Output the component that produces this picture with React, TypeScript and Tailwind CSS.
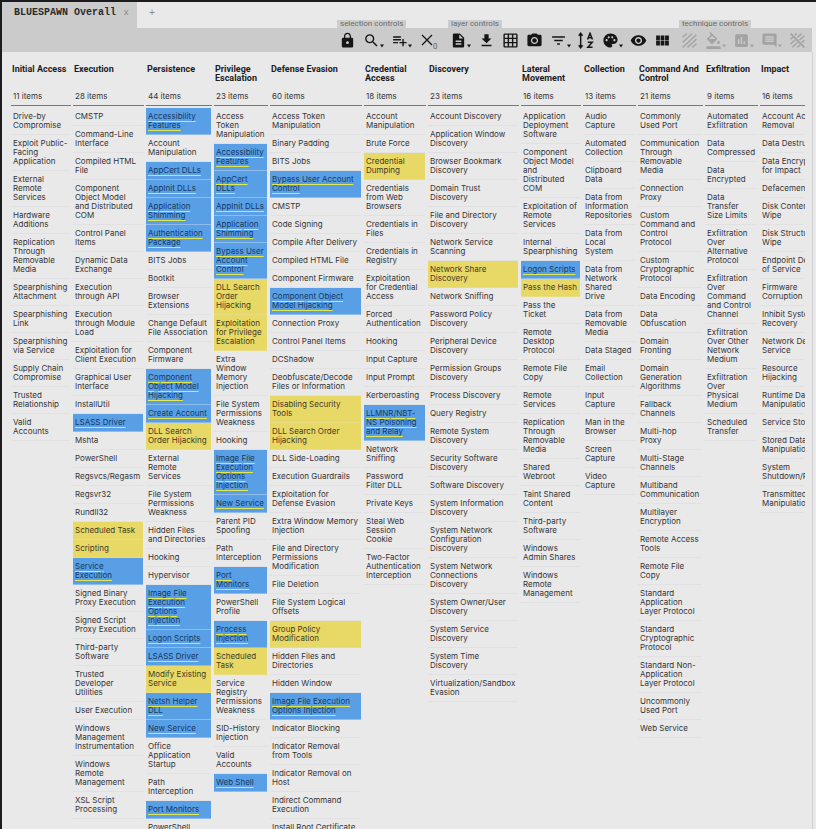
import type { ReactNode } from "react";
import {
  MdLock,
  MdSearch,
  MdPlaylistAdd,
  MdDescription,
  MdFileDownload,
  MdGridOn,
  MdCameraAlt,
  MdFilterList,
  MdPalette,
  MdVisibility,
  MdViewModule,
  MdFormatColorFill,
  MdInsertChart,
  MdInsertComment,
} from "react-icons/md";

/* Technique names keep their line breaks with "|". A leading "*" marks a
   detected technique (blue), a leading "~" a partially covered one (yellow). */
type Tactic = { name: string; count: number; techniques: string[] };

const tactics: Tactic[] = [
  {
    name: "Initial Access",
    count: 11,
    techniques: [
      "Drive-by|Compromise", "Exploit Public-|Facing|Application", "External|Remote|Services",
      "Hardware|Additions", "Replication|Through|Removable|Media", "Spearphishing|Attachment",
      "Spearphishing|Link", "Spearphishing|via Service", "Supply Chain|Compromise",
      "Trusted|Relationship", "Valid|Accounts",
    ],
  },
  {
    name: "Execution",
    count: 28,
    techniques: [
      "CMSTP", "Command-Line|Interface", "Compiled HTML|File", "Component|Object Model|and Distributed|COM",
      "Control Panel|Items", "Dynamic Data|Exchange", "Execution|through API", "Execution|through Module|Load",
      "Exploitation for|Client Execution", "Graphical User|Interface", "InstallUtil", "*LSASS Driver", "Mshta",
      "PowerShell", "Regsvcs/Regasm", "Regsvr32", "Rundll32", "~Scheduled Task", "~Scripting",
      "*Service|Execution", "Signed Binary|Proxy Execution", "Signed Script|Proxy Execution",
      "Third-party|Software", "Trusted|Developer|Utilities", "User Execution",
      "Windows|Management|Instrumentation", "Windows|Remote|Management", "XSL Script|Processing",
    ],
  },
  {
    name: "Persistence",
    count: 44,
    techniques: [
      "*Accessibility|Features", "Account|Manipulation", "*AppCert DLLs", "*AppInit DLLs", "*Application|Shimming",
      "*Authentication|Package", "BITS Jobs", "Bootkit", "Browser|Extensions", "Change Default|File Association",
      "Component|Firmware", "*Component|Object Model|Hijacking", "*Create Account", "~DLL Search|Order Hijacking",
      "External|Remote|Services", "File System|Permissions|Weakness", "Hidden Files|and Directories", "Hooking",
      "Hypervisor", "*Image File|Execution|Options|Injection", "*Logon Scripts", "*LSASS Driver",
      "~Modify Existing|Service", "*Netsh Helper|DLL", "*New Service", "Office|Application|Startup",
      "Path|Interception", "*Port Monitors", "PowerShell|Profile",
    ],
  },
  {
    name: "Privilege|Escalation",
    count: 23,
    techniques: [
      "Access|Token|Manipulation", "*Accessibility|Features", "*AppCert|DLLs", "*AppInit DLLs",
      "*Application|Shimming", "*Bypass User|Account|Control", "~DLL Search|Order|Hijacking",
      "~Exploitation|for Privilege|Escalation", "Extra|Window|Memory|Injection",
      "File System|Permissions|Weakness", "Hooking", "*Image File|Execution|Options|Injection", "*New Service",
      "Parent PID|Spoofing", "Path|Interception", "*Port|Monitors", "PowerShell|Profile", "*Process|Injection",
      "~Scheduled|Task", "Service|Registry|Permissions|Weakness", "SID-History|Injection", "Valid|Accounts",
      "*Web Shell",
    ],
  },
  {
    name: "Defense Evasion",
    count: 60,
    techniques: [
      "Access Token|Manipulation", "Binary Padding", "BITS Jobs", "*Bypass User Account|Control", "CMSTP",
      "Code Signing", "Compile After Delivery", "Compiled HTML File", "Component Firmware",
      "*Component Object|Model Hijacking", "Connection Proxy", "Control Panel Items", "DCShadow",
      "Deobfuscate/Decode|Files or Information", "~Disabling Security|Tools", "~DLL Search Order|Hijacking",
      "DLL Side-Loading", "Execution Guardrails", "Exploitation for|Defense Evasion",
      "Extra Window Memory|Injection", "File and Directory|Permissions|Modification", "File Deletion",
      "File System Logical|Offsets", "~Group Policy|Modification", "Hidden Files and|Directories", "Hidden Window",
      "*Image File Execution|Options Injection", "Indicator Blocking", "Indicator Removal|from Tools",
      "Indicator Removal on|Host", "Indirect Command|Execution", "Install Root Certificate",
    ],
  },
  {
    name: "Credential|Access",
    count: 18,
    techniques: [
      "Account|Manipulation", "Brute Force", "~Credential|Dumping", "Credentials|from Web|Browsers",
      "Credentials in|Files", "Credentials in|Registry", "Exploitation|for Credential|Access",
      "Forced|Authentication", "Hooking", "Input Capture", "Input Prompt", "Kerberoasting",
      "*LLMNR/NBT-|NS Poisoning|and Relay", "Network|Sniffing", "Password|Filter DLL", "Private Keys",
      "Steal Web|Session|Cookie", "Two-Factor|Authentication|Interception",
    ],
  },
  {
    name: "Discovery",
    count: 23,
    techniques: [
      "Account Discovery", "Application Window|Discovery", "Browser Bookmark|Discovery", "Domain Trust|Discovery",
      "File and Directory|Discovery", "Network Service|Scanning", "~Network Share|Discovery", "Network Sniffing",
      "Password Policy|Discovery", "Peripheral Device|Discovery", "Permission Groups|Discovery",
      "Process Discovery", "Query Registry", "Remote System|Discovery", "Security Software|Discovery",
      "Software Discovery", "System Information|Discovery", "System Network|Configuration|Discovery",
      "System Network|Connections|Discovery", "System Owner/User|Discovery", "System Service|Discovery",
      "System Time|Discovery", "Virtualization/Sandbox|Evasion",
    ],
  },
  {
    name: "Lateral|Movement",
    count: 16,
    techniques: [
      "Application|Deployment|Software", "Component|Object Model|and|Distributed|COM",
      "Exploitation of|Remote|Services", "Internal|Spearphishing", "*Logon Scripts", "~Pass the Hash",
      "Pass the|Ticket", "Remote|Desktop|Protocol", "Remote File|Copy", "Remote|Services",
      "Replication|Through|Removable|Media", "Shared|Webroot", "Taint Shared|Content", "Third-party|Software",
      "Windows|Admin Shares", "Windows|Remote|Management",
    ],
  },
  {
    name: "Collection",
    count: 13,
    techniques: [
      "Audio|Capture", "Automated|Collection", "Clipboard|Data", "Data from|Information|Repositories",
      "Data from|Local|System", "Data from|Network|Shared|Drive", "Data from|Removable|Media", "Data Staged",
      "Email|Collection", "Input|Capture", "Man in the|Browser", "Screen|Capture", "Video|Capture",
    ],
  },
  {
    name: "Command And|Control",
    count: 21,
    techniques: [
      "Commonly|Used Port", "Communication|Through|Removable|Media", "Connection|Proxy",
      "Custom|Command and|Control|Protocol", "Custom|Cryptographic|Protocol", "Data Encoding",
      "Data|Obfuscation", "Domain|Fronting", "Domain|Generation|Algorithms", "Fallback|Channels",
      "Multi-hop|Proxy", "Multi-Stage|Channels", "Multiband|Communication", "Multilayer|Encryption",
      "Remote Access|Tools", "Remote File|Copy", "Standard|Application|Layer Protocol",
      "Standard|Cryptographic|Protocol", "Standard Non-|Application|Layer Protocol", "Uncommonly|Used Port",
      "Web Service",
    ],
  },
  {
    name: "Exfiltration",
    count: 9,
    techniques: [
      "Automated|Exfiltration", "Data|Compressed", "Data|Encrypted", "Data|Transfer|Size Limits",
      "Exfiltration|Over|Alternative|Protocol", "Exfiltration|Over|Command|and Control|Channel",
      "Exfiltration|Over Other|Network|Medium", "Exfiltration|Over|Physical|Medium", "Scheduled|Transfer",
    ],
  },
  {
    name: "Impact",
    count: 16,
    techniques: [
      "Account Access|Removal", "Data Destruction", "Data Encrypted|for Impact", "Defacement",
      "Disk Content|Wipe", "Disk Structure|Wipe", "Endpoint Denial|of Service", "Firmware|Corruption",
      "Inhibit System|Recovery", "Network Denial of|Service", "Resource|Hijacking", "Runtime Data|Manipulation",
      "Service Stop", "Stored Data|Manipulation", "System|Shutdown/Reboot", "Transmitted Data|Manipulation",
    ],
  },
];

function Technique({ value }: { value: string }) {
  const mark = value[0];
  const text = value.replace(/^[*~]/, "").replaceAll("|", "\n");
  if (mark === "*") {
    return (
      <li className="border-b border-[#8fbcea] bg-[#599fe6] py-1 pl-0.5 text-[#16395f]">
        <span className="underline decoration-[#e3e84c] decoration-1 underline-offset-2 [text-decoration-skip-ink:none]">
          {text}
        </span>
      </li>
    );
  }
  if (mark === "~") {
    return <li className="border-b border-[#eadd80] bg-[#e8d966] py-1 pl-0.5 text-[#3f3b24]">{text}</li>;
  }
  return <li className="border-b border-[#e1e1e3] py-1 pl-0.5">{text}</li>;
}

function TacticColumn({ tactic }: { tactic: Tactic }) {
  return (
    <section className="min-w-0 overflow-hidden whitespace-pre">
      <header className="mb-0.5 border-b border-[#77777a] pb-1">
        <h2 className="h-[27px] pl-px font-['Roboto',sans-serif] text-[9px] leading-[9px] font-bold text-[#1d1d1f]">
          {tactic.name.replaceAll("|", "\n")}
        </h2>
        <p className="pl-0.5">{tactic.count} items</p>
      </header>
      <ul className="mr-px">
        {tactic.techniques.map((technique) => (
          <Technique key={technique} value={technique} />
        ))}
      </ul>
    </section>
  );
}

function Caret() {
  return (
    <svg viewBox="0 0 4 4" className="mt-3 size-1 shrink-0 fill-current" aria-hidden="true">
      <path d="M0 0.5h4L2 3.5z" />
    </svg>
  );
}

function ToolButton({ label, menu, disabled, children }: { label: string; menu?: boolean; disabled?: boolean; children: ReactNode }) {
  return (
    <button
      type="button"
      aria-label={label}
      disabled={disabled}
      className={`flex h-6 items-center pl-[3px] ${menu ? "w-7" : "w-6"} ${disabled ? "text-[#a3a3a3]" : "text-[#161616]"}`}
    >
      {children}
      {menu && <Caret />}
    </button>
  );
}

function ToolGroup({ label, children }: { label: string; children: ReactNode }) {
  return (
    <div role="group" aria-label={label} className="relative flex">
      <span className="absolute bottom-full left-px bg-[#cdcdcd] px-[3px] font-['Roboto',sans-serif] text-[8px] leading-[8px] whitespace-nowrap text-[#6b6b6b]">
        {label}
      </span>
      {children}
    </div>
  );
}

const icon = "size-[17px] shrink-0";

function SortIcon() {
  return (
    <svg viewBox="0 0 16 16" className="size-[17px] shrink-0 fill-none stroke-current" aria-hidden="true">
      <path d="M2.500 1.500v13M0.700 3.500l1.800-2.300L4.300 3.500M0.700 12.500l1.800 2.300L4.300 12.500" strokeWidth="1.4" />
      <path d="M9 7l2.300-5.800L13.600 7M9.800 5.300h3M9.200 9.600h4.200L9.300 14.300H13.700" strokeWidth="1.400" />
    </svg>
  );
}

function HatchIcon() {
  return (
    <svg viewBox="0 0 16 16" className="size-[17px] shrink-0 fill-none stroke-current" strokeWidth="1.300" aria-hidden="true">
      <path d="M1.500 5L5.500 1.500M1.500 9.800L10.500 1.500M1.500 14.500L14.500 2.500M6 14.500L14.500 6.700M10.700 14.500L14.500 11" />
    </svg>
  );
}

function ClearIcon() {
  return (
    <svg viewBox="0 0 16 16" className="size-[17px] shrink-0 fill-none stroke-current" strokeWidth="1.400" aria-hidden="true">
      <path d="M1.500 1.500l13 13" strokeWidth="1.800" />
      <path d="M5.500 3L7.200 1.500M7.700 5.200L12 1.500M9.900 7.500L14.500 3.500M12 10L14.500 7.800M1.500 6.800L3.600 5M1.500 11.200L5.800 7.500M3 14.300L8 9.900M7.800 14.300L10.400 12.100" />
    </svg>
  );
}

export default function App() {
  return (
    <div className="flex h-screen flex-col overflow-hidden border-t-2 border-l-2 border-[#1c1c1e] bg-[#e9e9ea] font-['Inter',sans-serif] text-[8px] leading-[9px] text-[#343436]">
      <nav className="flex h-[26px] shrink-0 font-['Liberation_Mono',monospace]" aria-label="Layers">
        <div className="flex w-[135px] items-center justify-between bg-[#cbcbcb] pr-2 pb-1 pl-3">
          <span className="text-[10px] leading-3 font-bold text-[#2b2b2b]">BLUESPAWN Overall</span>
          <button type="button" aria-label="Close layer" className="text-[9px] text-[#8a8a8a]">
            x
          </button>
        </div>
        <button type="button" aria-label="New layer" className="px-3 pb-1 text-[10px] text-[#8a8a8a]">
          +
        </button>
      </nav>

      <div className="mr-1 flex h-6 shrink-0 justify-end gap-[3px] bg-[#cbcbcb] pr-0.5" role="toolbar">
        <ToolGroup label="selection controls">
          <ToolButton label="Lock multi-tactic selection"><MdLock className={icon} /></ToolButton>
          <ToolButton label="Search" menu><MdSearch className={icon} /></ToolButton>
          <ToolButton label="Multi-select" menu><MdPlaylistAdd className={icon} /></ToolButton>
          <button type="button" aria-label="Deselect" className="flex h-6 w-7 items-center pl-[3px] text-[#161616]">
            <svg viewBox="0 0 16 16" className="size-4 shrink-0 fill-none stroke-current" strokeWidth="1.3" aria-hidden="true">
              <path d="M3 3l10 10M13 3L3 13" />
            </svg>
            <span className="-ml-0.5 pt-3 text-[7px] leading-[7px] text-[#555555]">0</span>
          </button>
        </ToolGroup>
        <ToolGroup label="layer controls">
          <ToolButton label="Layer information" menu><MdDescription className={icon} /></ToolButton>
          <ToolButton label="Download layer"><MdFileDownload className={icon} /></ToolButton>
          <ToolButton label="Export to spreadsheet"><MdGridOn className={icon} /></ToolButton>
          <ToolButton label="Render to image"><MdCameraAlt className={icon} /></ToolButton>
          <ToolButton label="Filters" menu><MdFilterList className={icon} /></ToolButton>
          <ToolButton label="Sorting"><SortIcon /></ToolButton>
          <ToolButton label="Color setup" menu><MdPalette className={icon} /></ToolButton>
          <ToolButton label="Show or hide disabled"><MdVisibility className={icon} /></ToolButton>
          <ToolButton label="Matrix view"><MdViewModule className={icon} /></ToolButton>
        </ToolGroup>
        <ToolGroup label="technique controls">
          <ToolButton label="Toggle state" disabled><HatchIcon /></ToolButton>
          <ToolButton label="Background color" menu disabled><MdFormatColorFill className={icon} /></ToolButton>
          <ToolButton label="Scoring" menu disabled><MdInsertChart className={icon} /></ToolButton>
          <ToolButton label="Comment" menu disabled><MdInsertComment className={icon} /></ToolButton>
          <ToolButton label="Clear annotations" disabled><ClearIcon /></ToolButton>
        </ToolGroup>
      </div>

      <main className="mr-[3px] grid min-h-0 flex-1 grid-cols-[60fr_71fr_66fr_54fr_92fr_62fr_91fr_60fr_53fr_65fr_53fr_45fr] gap-x-0.5 overflow-hidden border-r border-[#d0d0d2] pt-[13px] pr-[7px] pl-[9px]">
        {tactics.map((tactic) => (
          <TacticColumn key={tactic.name} tactic={tactic} />
        ))}
      </main>
    </div>
  );
}
